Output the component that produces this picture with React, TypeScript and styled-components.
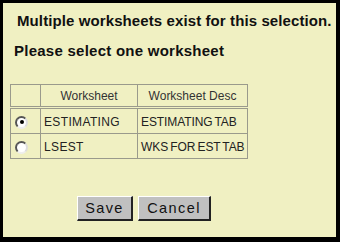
import React from "react";
import styled, { createGlobalStyle } from "styled-components";

const Global = createGlobalStyle`
  html, body { margin: 0; padding: 0; background: #000; }
  body { width: 340px; height: 242px; overflow: hidden; }
`;

const Frame = styled.div`
  box-sizing: border-box;
  width: 340px;
  height: 242px;
  border-style: solid;
  border-color: #000;
  border-width: 3px 4px 5px 3px;
  background: #f0f0c2;
  font-family: "Liberation Sans", Arial, sans-serif;
  color: #111;
  display: flex;
  flex-direction: column;
`;

const Title = styled.div`
  font-weight: bold;
  font-size: 15px;
  margin: 9px 0 0 14px;
  line-height: 17px;
  letter-spacing: 0.1px;
  white-space: nowrap;
`;

const Subtitle = styled.div`
  font-weight: bold;
  font-size: 15px;
  margin: 13px 0 0 11px;
  line-height: 17px;
  letter-spacing: 0.25px;
  white-space: nowrap;
`;

const Table = styled.table`
  margin: 25px 0 0 7px;
  width: 238px;
  border-collapse: collapse;
  border: 1px solid #9a9a8c;
  font-size: 12px;
  table-layout: fixed;
`;

const HeadCell = styled.th<{ $w: number }>`
  width: ${(p) => p.$w}px;
  height: 21px;
  padding: 0;
  font-weight: normal;
  text-align: center;
  color: #333;
  border: 1px solid #9a9a8c;
  border-bottom: 3px double #9a9a8c;
  white-space: nowrap;
  overflow: hidden;
`;

const Cell = styled.td<{ $tight?: boolean }>`
  height: 23px;
  padding: 1px 0 0 3px;
  text-align: left;
  border: 1px solid #9a9a8c;
  color: #222;
  white-space: nowrap;
  overflow: hidden;
  letter-spacing: ${(p) => (p.$tight ? "-0.1px" : "0.35px")};
  word-spacing: ${(p) => (p.$tight ? "-1px" : "0")};
`;

const Radio = styled.span<{ $checked?: boolean }>`
  display: inline-block;
  box-sizing: border-box;
  width: 13px;
  height: 13px;
  margin-left: 1px;
  border-radius: 50%;
  vertical-align: middle;
  background: #fff;
  border: 2px solid;
  border-color: #555 #ddd #eee #555;
  position: relative;
  &::after {
    content: "";
    display: ${(p) => (p.$checked ? "block" : "none")};
    position: absolute;
    left: 2.5px;
    top: 2.5px;
    width: 4px;
    height: 4px;
    border-radius: 50%;
    background: #000;
  }
`;

const ButtonRow = styled.div`
  display: flex;
  gap: 5px;
  margin: 37px 0 0 74px;
`;

const Button = styled.button<{ $w: number }>`
  box-sizing: border-box;
  width: ${(p) => p.$w}px;
  height: 25px;
  padding: 0;
  background: #c0c0c0;
  font-family: "Liberation Sans", Arial, sans-serif;
  font-size: 14.5px;
  letter-spacing: 1.4px;
  color: #111;
  border-style: solid;
  border-width: 1px 2px 2px 1px;
  border-color: #fff #222 #222 #fff;
`;

const rows = [
  { name: "ESTIMATING", desc: "ESTIMATING TAB", checked: true },
  { name: "LSEST", desc: "WKS FOR EST TAB", checked: false },
];

export default function App() {
  return (
    <>
      <Global />
      <Frame>
        <Title>Multiple worksheets exist for this selection.</Title>
        <Subtitle>Please select one worksheet</Subtitle>
        <Table>
          <thead>
            <tr>
              <HeadCell $w={29} />
              <HeadCell $w={96}>Worksheet</HeadCell>
              <HeadCell $w={109}>Worksheet Desc</HeadCell>
            </tr>
          </thead>
          <tbody>
            {rows.map((r) => (
              <tr key={r.name}>
                <Cell>
                  <Radio $checked={r.checked} />
                </Cell>
                <Cell>{r.name}</Cell>
                <Cell $tight>{r.desc}</Cell>
              </tr>
            ))}
          </tbody>
        </Table>
        <ButtonRow>
          <Button $w={56}>Save</Button>
          <Button $w={73}>Cancel</Button>
        </ButtonRow>
      </Frame>
    </>
  );
}
